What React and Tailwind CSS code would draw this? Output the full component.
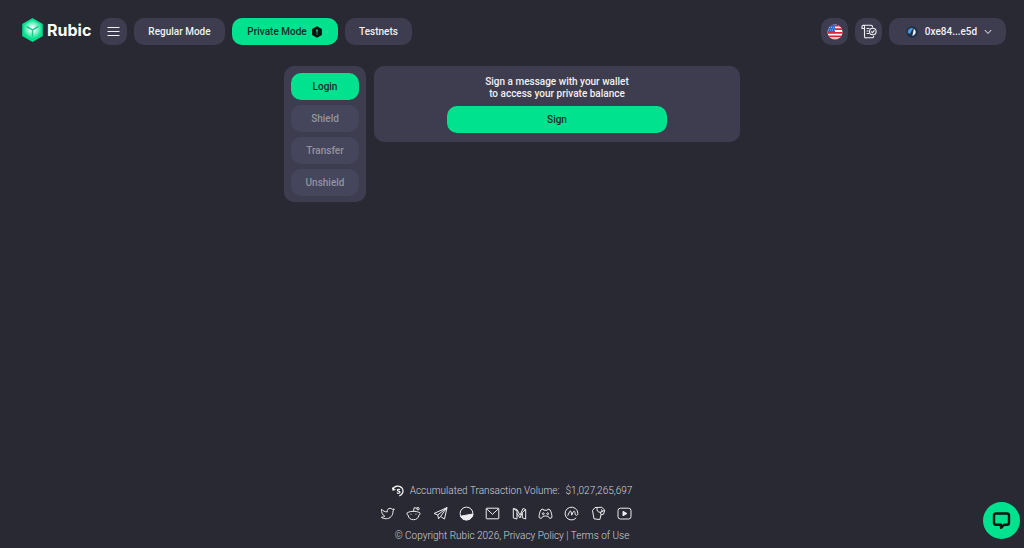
import { useState } from "react";

const tabs = ["Login", "Shield", "Transfer", "Unshield"];

const socials = [
  {
    name: "Twitter",
    icon: <path d="M1.500 3.200C3 5 4.800 5.900 7.300 5.900C7 3.600 8.300 2.300 10 2.300C11 2.300 11.700 2.700 12.200 3.300L14.300 3L13 5C13.100 9.800 10 12.700 6.200 12.700C4.300 12.700 2.700 12.300 1.400 11.300C3 11.300 4 10.900 4.800 10.200C2.400 9 1.300 6.500 1.500 3.200Z" />,
  },
  {
    name: "Reddit",
    icon: (
      <>
        <path d="M2.200 9.200C.6 9 .4 6.400 2.300 6.300C5 4.900 10 4.900 12.700 6.300C14.600 6.400 14.400 9 12.800 9.200C12.600 12 10.500 13.700 7.500 13.700C4.500 13.700 2.400 12 2.200 9.200Z" />
        <path d="M7.500 5.200L8.200 1.700L11 2.200M5 8.200H5.100M9.900 8.200H10" strokeLinecap="round" />
        <circle cx="12" cy="2.700" r="1.200" />
      </>
    ),
  },
  {
    name: "Telegram",
    icon: <path d="M1 7.500L14 1.600L11.500 13L7.500 10.500L5.500 12.800L4.800 8.900L14 1.600L7.500 10.500M1 7.500L4.800 8.900" />,
  },
  {
    name: "Teletype",
    icon: (
      <>
        <circle cx="7.500" cy="7.500" r="6.400" />
        <path d="M1.500 10.200L13.900 8C13.900 11.200 11 13.900 7.500 13.900C4.700 13.900 2.500 12.600 1.500 10.200Z" fill="currentColor" />
      </>
    ),
  },
  {
    name: "Email",
    icon: (
      <>
        <rect x="1.200" y="2.200" width="12.600" height="10.600" rx="0.600" />
        <path d="M1.500 2.700L7.500 8.300L13.500 2.700" />
      </>
    ),
  },
  {
    name: "Medium",
    icon: <path d="M1.300 2.500V12L5 13V5L1.300 2.500M1.300 2.500L5 3.500L8 9.200L11 2.500L13.700 3.500V13L10.300 11.800V6.500L8 12L5 7.500M10.300 6.500L13.700 3.500" />,
  },
  {
    name: "Discord",
    icon: (
      <>
        <path d="M5 3L2.900 3.900C1.500 6.500 1 9 1.100 11.600L3.300 12.500L4.800 10.400C6.700 9.900 8.300 9.900 10.200 10.400L11.700 12.500L13.900 11.600C14 9 13.500 6.500 12.100 3.900L10 3L9.300 4.200H5.700L5 3Z" />
        <circle cx="5.300" cy="7.700" r="0.900" />
        <circle cx="9.700" cy="7.700" r="0.900" />
      </>
    ),
  },
  {
    name: "CoinMarketCap",
    icon: <path d="M12.200 11.900A6.400 6.400 0 1 1 13.900 7.500C13.900 9.800 11.200 9.900 11.100 7.900C11 5.300 10.200 4.200 9.200 6L7.700 9.200L7.200 6C6.900 4.600 6 4.700 5.500 5.900L3.700 9.800" />,
  },
  {
    name: "Galxe",
    icon: (
      <>
        <path d="M1.500 4.500L4 1.500L10.800 1.300L13.800 4.200L12.500 8.200L10 8.800L8.800 13.600L3 12.800L1.500 4.500Z" />
        <path d="M6 2C5.500 5 7.300 6.500 9.500 6.300C11.300 6.100 11.500 4 10.300 3.300M10 8.800L9.500 6.300L13.800 4.200" />
      </>
    ),
  },
  {
    name: "YouTube",
    icon: (
      <>
        <rect x="1" y="2.200" width="13" height="10.800" rx="2.400" />
        <path d="M6 5.300L9.900 7.500L6 9.800Z" fill="currentColor" />
      </>
    ),
  },
];

function Logo() {
  return (
    <a href="#" className="flex items-center gap-1 text-white">
      <svg width="21" height="24" viewBox="0 0 21 24" aria-hidden="true">
        <defs>
          <radialGradient id="cube" gradientUnits="userSpaceOnUse" cx="10.500" cy="11" r="10.500">
            <stop offset="0.150" stopColor="#ffffff" />
            <stop offset="0.900" stopColor="#00e28e" />
          </radialGradient>
        </defs>
        <path d="M10.500 1L20 6.300V17.700L10.500 23L1 17.700V6.300Z" fill="url(#cube)" stroke="#00e28e" strokeWidth="1.500" strokeLinejoin="round" />
        <path d="M4.500 8.500L10.500 11.800L16.500 8.500M10.500 11.800V18.500" fill="none" stroke="#10d088" strokeWidth="1.500" />
      </svg>
      <span className="font-['Inter',sans-serif] text-[16px] leading-5 font-bold">Rubic</span>
    </a>
  );
}

function Flag() {
  return (
    <svg width="16" height="16" viewBox="0 0 16 16" aria-hidden="true">
      <clipPath id="flag">
        <circle cx="8" cy="8" r="7.500" />
      </clipPath>
      <g clipPath="url(#flag)">
        <path d="M0 0H16V16H0Z" fill="#f5f5f5" />
        <path d="M0 1.600H16M0 5.200H16M0 8.800H16M0 12.300H16M0 15.500H16" stroke="#e02038" strokeWidth="1.700" />
        <path d="M0 0H8V7.900H0Z" fill="#2f6bc4" />
        <path d="M2 3.500H8M1 6H8" stroke="#c8daf5" strokeWidth="0.800" strokeDasharray="0.800 1.200" />
      </g>
    </svg>
  );
}

function Header() {
  return (
    <header className="flex items-center justify-between pt-[18px] pr-[18px] pl-[22px] font-medium">
      <div className="flex items-center gap-[7px]">
        <div className="w-[71px] pb-[3px]">
          <Logo />
        </div>
        <button aria-label="Menu" className="flex h-[27px] w-[27px] items-center justify-center rounded-[10px] bg-[#3d3d4f]">
          <svg width="13" height="11" viewBox="0 0 13 11" stroke="currentColor" strokeWidth="1.200">
            <path d="M0.500 1.500H12.500M0.500 5.500H12.500M0.500 9.500H12.500" />
          </svg>
        </button>
        <button className="h-[27px] w-[91px] rounded-[10px] bg-[#3d3d4f]">Regular Mode</button>
        <button className="flex h-[27px] w-[106px] items-center justify-center gap-1 rounded-[10px] bg-[#00e28e] text-[#1c2a2b]">
          Private Mode
          <svg width="12" height="12" viewBox="0 0 12 12" aria-hidden="true">
            <path d="M6 0.300L10.900 3V9L6 11.700L1.100 9V3Z" fill="#08120f" />
            <path d="M4.800 4L6 3.200L7.200 4L6.400 6.500V9H5.600V6.500Z" fill="#00b878" />
          </svg>
        </button>
        <button className="h-[27px] w-[67px] rounded-[10px] bg-[#3d3d4f]">Testnets</button>
      </div>
      <div className="flex items-center gap-[7px]">
        <button aria-label="Language" className="flex h-[27px] w-[27px] items-center justify-center rounded-[10px] bg-[#3d3d4f]">
          <Flag />
        </button>
        <button aria-label="Recent transactions" className="flex h-[27px] w-[27px] items-center justify-center rounded-[10px] bg-[#3d3d4f]">
          <svg width="16" height="15" viewBox="0 0 16 15" fill="none" stroke="currentColor" strokeWidth="1.100">
            <path d="M3.500 4.500H1V2.700C1 .8 3.500 .8 3.500 2.700V12.500C3.500 14.300 5 14 5.500 13.700H11.500C12.500 13.700 13 12.500 12.500 11.800M2.300 1.200H10C11.200 1.200 11.600 2 11.600 3.500M5.500 4.500H8.500M5.500 7H7.500M5.500 9.500H8" />
            <circle cx="11.800" cy="7.500" r="3.300" />
            <path d="M10.300 7.500L11.500 8.600L13.400 6.400" />
          </svg>
        </button>
        <button className="flex h-[27px] w-[117px] items-center justify-center gap-[7px] rounded-[10px] bg-[#3d3d4f] pl-[3px]">
          <svg width="12" height="12" viewBox="0 0 12 12" aria-hidden="true">
            <circle cx="6" cy="6" r="5.800" fill="#1d3047" />
            <path d="M1.800 7C1.500 3.500 4 1.600 7.200 2L4 7.800Z" fill="#4b9ade" />
            <path d="M7.800 2.800C10.500 4.500 10.600 8.800 6.300 10Z" fill="#e9f2fa" />
          </svg>
          0xe84...e5d
          <svg width="8" height="6" viewBox="0 0 8 6" fill="none" stroke="currentColor">
            <path d="M0.800 1L4 4.500L7.200 1" />
          </svg>
        </button>
      </div>
    </header>
  );
}

function Footer() {
  return (
    <footer className="flex flex-col items-center pb-1 leading-4 font-light text-[#d2d2d7]">
      <div className="flex items-center gap-[6px]">
        <svg width="12" height="12" viewBox="0 0 12 12" fill="none" stroke="#ffffff" strokeWidth="1.200" aria-hidden="true">
          <path d="M0.800 4.800C2 .6 7.500 0 10 3C12.200 6 10.500 10 7.300 10.900M0.500 2.500L1 5L3.400 4.500" />
          <path d="M8 4.700C7 3.900 5.300 4.200 5.400 5.300C5.600 6.500 8 5.900 8 7.300C7.900 8.500 6 8.500 5 7.700" />
        </svg>
        <span>Accumulated Transaction Volume:</span>
        <span>$1,027,265,697</span>
      </div>
      <ul className="flex w-[264px] items-center justify-between py-[7px] pr-3">
        {socials.map((social) => (
          <li key={social.name}>
            <a href="#" aria-label={social.name} className="block">
              <svg width="15" height="15" viewBox="0 0 15 15" fill="none" stroke="currentColor" strokeWidth="1" strokeLinejoin="round" className="text-[#eeeef1]">
                {social.icon}
              </svg>
            </a>
          </li>
        ))}
      </ul>
      <p>
        © Copyright Rubic 2026, <a href="#">Privacy Policy</a> | <a href="#">Terms of Use</a>
      </p>
    </footer>
  );
}

function App() {
  const [activeTab, setActiveTab] = useState("Login");

  return (
    <div className="flex min-h-screen flex-col bg-[#292934] font-['Roboto',sans-serif] text-[10px] leading-3 text-[#f0f0f3]">
      <Header />
      <main className="flex flex-1 items-start justify-center gap-2 pt-[21px] font-medium">
        <nav className="flex w-[82px] flex-col gap-[5px] rounded-[10px] bg-[#3d3d4f] px-[7px] pt-[7px] pb-[6px]">
          {tabs.map((tab) => (
            <button
              key={tab}
              onClick={() => setActiveTab(tab)}
              disabled={tab !== "Login"}
              className={
                tab === activeTab
                  ? "h-[27px] rounded-[10px] bg-[#00e28e] text-[#1c2a2b]"
                  : "h-[27px] rounded-[10px] bg-[#45455b] text-[#9494a0]"
              }
            >
              {tab}
            </button>
          ))}
        </nav>
        <section className="flex w-[366px] flex-col items-center rounded-[10px] bg-[#3d3d4f] pt-[10px] pb-[9px] text-center">
          <p>
            Sign a message with your wallet
            <br />
            to access your private balance
          </p>
          <button className="mt-[6px] h-[27px] w-[220px] rounded-[10px] bg-[#00e28e] text-[#1c2a2b]">Sign</button>
        </section>
      </main>
      <Footer />
      <button aria-label="Open chat" className="fixed right-1 bottom-[9px] flex h-[37px] w-[37px] items-center justify-center rounded-full bg-[#00e28e] text-[#0b1512]">
        <svg width="19" height="19" viewBox="0 0 19 19" fill="none" stroke="currentColor" strokeWidth="2.400" strokeLinejoin="round">
          <path d="M4 2.500H15C16.200 2.500 17 3.300 17 4.500V11.500C17 13 16.200 13.800 15 13.800H12L9 16.800V13.800H4C2.800 13.800 2 13 2 11.500V4.500C2 3.300 2.800 2.500 4 2.500Z" />
        </svg>
      </button>
    </div>
  );
}

export default App;
